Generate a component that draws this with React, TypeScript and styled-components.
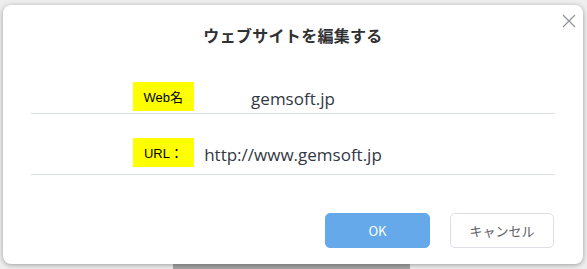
import styled, { createGlobalStyle } from "styled-components";

const GlobalStyle = createGlobalStyle`
  html, body {
    margin: 0;
    padding: 0;
    background: #ececec;
  }
  body {
    font-family: "Noto Sans CJK JP", "Liberation Sans", sans-serif;
    overflow: hidden;
  }
`;

const ROWS = [
  { label: "Web名", value: "gemsoft.jp", top: 8, bottom: 2 },
  { label: "URL：", value: "http://www.gemsoft.jp", top: 24, bottom: 7 },
];

const App: React.FC = () => {
  return (
    <Stage>
      <GlobalStyle />
      <Dialog>
        <Header>
          <Title>ウェブサイトを編集する</Title>
          <CloseButton aria-label="閉じる">
            <svg width="14" height="14" viewBox="0 0 14 14">
              <path d="M1 1 L13 13 M13 1 L1 13" stroke="#8e9299" strokeWidth="1.2" fill="none" />
            </svg>
          </CloseButton>
        </Header>

        <Body>
          {ROWS.map((row) => (
            <Row key={row.label} $top={row.top} $bottom={row.bottom}>
              <Label>{row.label}</Label>
              <Value>{row.value}</Value>
            </Row>
          ))}
        </Body>

        <Footer>
          <Button $primary>OK</Button>
          <Button>キャンセル</Button>
        </Footer>
      </Dialog>
      <BottomStrip>
        <StripBlock />
      </BottomStrip>
    </Stage>
  );
};

const Stage = styled.div`
  width: 587px;
  height: 269px;
  padding: 5px 4px 0 3px;
  box-sizing: border-box;
  background: #eeeeee;
`;

const Dialog = styled.div`
  position: relative;
  z-index: 1;
  width: 580px;
  height: 259px;
  box-sizing: border-box;
  background: #ffffff;
  border-radius: 8px;
  box-shadow: 0 1px 5px rgba(0, 0, 0, 0.35);
  display: flex;
  flex-direction: column;
`;

const Header = styled.div`
  padding: 18px 0 27px;
  text-align: center;
`;

const Title = styled.h2`
  margin: 0;
  font-size: 16px;
  line-height: 24px;
  font-weight: 700;
  color: #303133;
  letter-spacing: 0.3px;
`;

const CloseButton = styled.button`
  position: absolute;
  top: 9px;
  right: 7px;
  width: 14px;
  height: 14px;
  padding: 0;
  border: none;
  background: none;
  display: flex;
`;

const Body = styled.div`
  padding: 0 28px;
`;

const Row = styled.div<{ $top: number; $bottom: number }>`
  display: grid;
  grid-template-columns: 163px 198px;
  align-items: center;
  padding: ${(p) => p.$top}px 0 ${(p) => p.$bottom}px;
  border-bottom: 1px solid #d8dce5;
`;

const Label = styled.span`
  justify-self: end;
  height: 29px;
  padding: 0 11px;
  display: flex;
  align-items: center;
  background: #ffff00;
  color: #000000;
  font-family: "Liberation Sans", "Noto Sans CJK JP", sans-serif;
  font-size: 13px;
  font-weight: 400;
`;

const Value = styled.span`
  text-align: center;
  font-family: "Open Sans", "Liberation Sans", sans-serif;
  font-size: 17px;
  color: #333844;
  white-space: nowrap;
  padding-top: 3px;
`;

const Footer = styled.div`
  margin-top: 38px;
  padding-right: 29px;
  display: flex;
  justify-content: flex-end;
  gap: 20px;
`;

const Button = styled.button<{ $primary?: boolean }>`
  width: ${(p) => (p.$primary ? 105 : 104)}px;
  height: 35px;
  border-radius: 5px;
  font-family: "Noto Sans CJK JP", "Liberation Sans", sans-serif;
  font-size: 13px;
  border: 1px solid ${(p) => (p.$primary ? "#66a9ea" : "#dcdfe6")};
  background: ${(p) => (p.$primary ? "#66a9ea" : "#ffffff")};
  color: ${(p) => (p.$primary ? "#ffffff" : "#606266")};
`;

const BottomStrip = styled.div`
  height: 5px;
  display: flex;
`;

const StripBlock = styled.div`
  margin-left: 170px;
  width: 237px;
  background: #a4a4a4;
`;

export default App;
